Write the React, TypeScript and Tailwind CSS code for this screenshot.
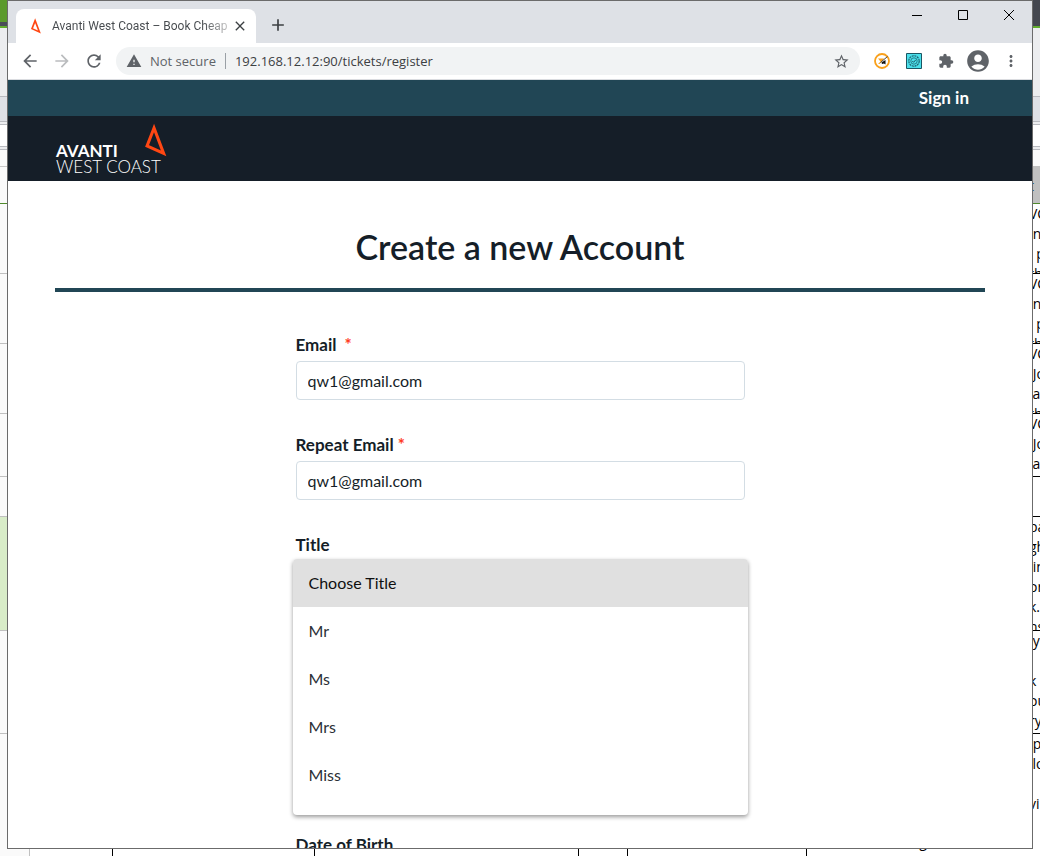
import React from "react";
import { MdArrowBack, MdArrowForward, MdRefresh, MdWarning, MdStarBorder, MdExtension, MdAccountCircle, MdMoreVert, MdClose, MdAdd } from "react-icons/md";

const leftBands = [
  "h-[22px] bg-[#5b9a2c]",
  "h-[4px] bg-[#4a4d57]",
  "h-[2px] bg-[#62ad2e]",
  "h-[69px] bg-[#ecedef] border-b border-[#b9bbc0]",
  "h-[25px] bg-[#dfe1e6] border-b border-[#b9bbc0]",
  "h-[3px] bg-[#ecedef] border-b border-[#b9bbc0]",
  "h-[22px] bg-white border-b border-[#b9bbc0]",
  "h-[3px] bg-[#ecedef] border-b border-[#b9bbc0]",
  "h-[17px] bg-[#fafafa] border-b border-[#c8c8c8]",
  "h-[37px] bg-[#fafafa] border-b border-[#4f8a2c]",
  "h-[70px] bg-[#fafafa] border-b border-[#c0c0c0]",
  "h-[70px] bg-[#fafafa] border-b border-[#c0c0c0]",
  "h-[70px] bg-[#fafafa] border-b border-[#c0c0c0]",
  "h-[63px] bg-[#fafafa] border-b border-[#c0c0c0]",
  "h-[40px] bg-[#fafafa] border-b border-[#c0c0c0]",
  "h-[114px] bg-[#d8ecc8] border-b border-[#c0c0c0]",
  "h-[103px] bg-[#fafafa] border-b border-[#c0c0c0]",
];

const rightBands = [
  "h-[26px] bg-[#44474f]",
  "h-[2px] bg-[#62ad2e]",
  "h-[69px] bg-[#ecedef] border-b border-[#b9bbc0]",
  "h-[25px] bg-[#dfe1e6] border-b border-[#b9bbc0]",
  "h-[3px] bg-[#ecedef] border-b border-[#b9bbc0]",
  "h-[22px] bg-white border-b border-[#b9bbc0]",
  "h-[3px] bg-[#ecedef] border-b border-[#b9bbc0]",
  "h-[16px] bg-[#fafafa]",
];

const sheetCells = [
  { size: "h-[70px]", lines: ["VC", "\u00a0ne", "\u00a0\u00a0p", "th"] },
  { size: "h-[70px]", lines: ["VC", "\u00a0ne", "\u00a0\u00a0p", "th"] },
  { size: "h-[70px]", lines: ["VC", "\u00a0Jo", "ia", "th"] },
  { size: "h-[63px]", lines: ["VC", "\u00a0Jo", "ia"] },
  { size: "h-[40px]", lines: [] },
  { size: "h-[114px]", lines: ["pa", "gh", "\u00a0in", "or", "k.", "ns"] },
  { size: "h-[103px]", lines: ["\u00a0y", "\u00a0", "k", "ou", "ry"] },
  { size: "h-[120px]", lines: ["\u00a0p", "ilo", "\u00a0", "vi"] },
];

function Sail({ className, weight }: { className: string; weight: number }) {
  return (
    <svg viewBox="0 0 22 33" className={className} fill="none" stroke="#ff4713" strokeWidth={weight} aria-hidden="true">
      <path d="M9.2 5.5 2.8 22 18 28.8Z" strokeMiterlimit="8" />
    </svg>
  );
}

function TabStrip() {
  return (
    <div className="flex h-[42px] items-end bg-[#dee1e6] pl-2">
      <div className="flex h-[34px] w-[240px] items-center rounded-t-lg bg-white pl-3 pr-2">
        <Sail className="h-4 w-4" weight={3.4} />
        <span className="ml-2 w-[176px] overflow-hidden whitespace-nowrap bg-linear-to-r from-[#45494d] from-85% to-[#c8c8c8] bg-clip-text font-[Roboto,sans-serif] text-[12px] text-transparent">
          Avanti West Coast – Book Cheap
        </span>
        <button aria-label="Close tab" className="ml-1 text-[#3c4043]"><MdClose size={16} /></button>
      </div>
      <button aria-label="New tab" className="mb-2 ml-3 text-[#3c4043]"><MdAdd size={20} /></button>
      <div className="ml-auto flex self-start text-black">
        <button aria-label="Minimize" className="grid h-7 w-[46px] place-items-center">
          <svg width="10" height="10" stroke="currentColor" aria-hidden="true"><path d="M0 5.5H10" /></svg>
        </button>
        <button aria-label="Maximize" className="grid h-7 w-[46px] place-items-center">
          <svg width="10" height="10" fill="none" stroke="currentColor" aria-hidden="true"><path d="M.5.5H9.5V9.5H.5Z" /></svg>
        </button>
        <button aria-label="Close" className="grid h-7 w-[46px] place-items-center">
          <svg width="10" height="10" stroke="currentColor" aria-hidden="true"><path d="M0 0 10 10M10 0 0 10" /></svg>
        </button>
      </div>
    </div>
  );
}

function Toolbar() {
  return (
    <div className="flex h-[37px] items-center border-b border-[#dadce0] bg-white pl-3 pr-3 font-['Open_Sans',sans-serif] text-[#5f6368]">
      <button aria-label="Back"><MdArrowBack size={20} /></button>
      <button aria-label="Forward" className="ml-3 text-[#babcbe]"><MdArrowForward size={20} /></button>
      <button aria-label="Reload" className="ml-3"><MdRefresh size={20} /></button>
      <div className="ml-3 flex h-7 flex-1 items-center rounded-full bg-[#f1f3f4] pl-2.5 pr-2.5">
        <MdWarning size={16} />
        <span className="ml-2 pt-0.5 text-[13px]">Not secure</span>
        <span className="ml-[9px] h-4 w-px bg-[#9aa0a6]" />
        <input aria-label="Address" defaultValue="192.168.12.12:90/tickets/register" className="ml-[9px] min-w-0 flex-1 bg-transparent pt-0.5 text-[13px] text-[#3c4043] outline-none" />
        <button aria-label="Bookmark"><MdStarBorder size={17} /></button>
      </div>
      <button aria-label="Speed extension" className="ml-3.5">
        <svg width="16" height="16" viewBox="0 0 16 16" fill="none" aria-hidden="true">
          <circle cx="8" cy="8" r="7" fill="#fff" stroke="#f9a01b" strokeWidth="1.8" />
          <path d="M4 5.5H10L8 8.5 5.5 11H4L6.5 8.5Z" fill="#f9a01b" />
          <path d="M13.5 3.5 6.5 9.5" stroke="#444" />
          <path d="M7.5 9.5 11.5 7V11.5L10 10.5 8 11Z" fill="#111" />
        </svg>
      </button>
      <button aria-label="Seal extension" className="ml-4">
        <svg width="16" height="16" viewBox="0 0 16 16" fill="none" stroke="#1b5663" aria-hidden="true">
          <path fill="#4adfea" d="M.5.5H15.5V15.5H.5Z" />
          <circle cx="8" cy="8" r="5.2" strokeDasharray="2 .7" strokeWidth="1.1" />
          <circle cx="8" cy="8" r="3.2" strokeWidth=".7" />
          <path d="M6.3 8 7.6 9.3 9.8 6.8" />
        </svg>
      </button>
      <button aria-label="Extensions" className="ml-4"><MdExtension size={16} /></button>
      <button aria-label="Profile" className="ml-[11px]"><MdAccountCircle size={26} /></button>
      <button aria-label="Menu" className="ml-[11px]"><MdMoreVert size={18} /></button>
    </div>
  );
}

function EmailField({ id, label, gap }: { id: string; label: string; gap: string }) {
  return (
    <div className="flex flex-col">
      <label htmlFor={id} className="text-[17px] leading-6 font-bold">
        {label}<span className={`${gap} text-[#ff3b1f]`}>*</span>
      </label>
      <input id={id} type="email" defaultValue="qw1@gmail.com" className="mt-1 h-[39px] w-full rounded border border-[#d3dde4] bg-white px-[11px] text-base outline-none" />
    </div>
  );
}

function RegisterPage() {
  return (
    <div className="flex-1 overflow-hidden bg-white font-['Lato',sans-serif] text-[#151e28]">
      <div className="flex h-9 items-center justify-end bg-[#214655] pr-[63px]">
        <a href="#signin" className="text-[17px] font-bold text-white">Sign in</a>
      </div>
      <header className="flex h-[65px] bg-[#151e28] px-12">
        <a href="#home" className="relative flex w-[112px] flex-col justify-end pb-1.5 text-white">
          <Sail className="absolute right-0 top-[5px] h-[38px] w-[24px]" weight={2.8} />
          <span className="text-[17px] leading-4 font-bold">AVANTI</span>
          <span className="text-[17px] leading-4 font-light whitespace-nowrap">WEST COAST</span>
        </a>
      </header>
      <main className="px-[47px]">
        <h1 className="border-b-4 border-[#214655] pt-[42px] pb-[18px] text-center text-[34px] leading-[47px] font-semibold">Create a new Account</h1>
        <form className="mx-auto mt-[41px] flex w-[449px] max-w-full flex-col gap-[33px]">
          <EmailField id="email" label="Email" gap="ml-2" />
          <EmailField id="repeat-email" label="Repeat Email" gap="ml-1" />
          <div>
            <label htmlFor="title" className="block text-[17px] leading-6 font-bold">Title</label>
            <select id="title" size={5} defaultValue="Choose Title" className="-mx-[3px] mt-0.5 block h-64 w-[calc(100%+6px)] appearance-none overflow-hidden rounded bg-white text-base text-[#2b3036] shadow-[0_2px_4px_rgba(0,0,0,0.4)] outline-none">
              {["Choose Title", "Mr", "Ms", "Mrs", "Miss"].map((t) => (
                <option key={t} className="h-12 px-4 pt-3.5 checked:bg-[#e0e0e0]">{t}</option>
              ))}
            </select>
            <p className="mt-[18px] text-[17px] leading-6 font-bold">Date of Birth</p>
          </div>
        </form>
      </main>
    </div>
  );
}

export default function App() {
  return (
    <div className="flex h-screen flex-col overflow-hidden bg-white">
      <div className="flex min-h-0 flex-1">
        <div className="w-[7px] shrink-0 overflow-hidden bg-[#fafafa]">
          {leftBands.map((b, i) => <div key={i} className={b} />)}
        </div>
        <div className="flex min-w-0 flex-1 flex-col border border-[#6b6b6b]">
          <TabStrip />
          <Toolbar />
          <RegisterPage />
        </div>
        <div className="w-[7px] shrink-0 overflow-hidden bg-white font-['Open_Sans',sans-serif] text-sm leading-5 text-black">
          {rightBands.map((b, i) => <div key={i} className={b} />)}
          <div className="h-[38px] overflow-hidden border-b border-[#4f8a2c] bg-[#c0c0c0] pt-2.5">
            <p className="-ml-1 text-[#1f4e79]">t</p>
          </div>
          {sheetCells.map((c, i) => (
            <div key={i} className={`${c.size} overflow-hidden border-b border-black`}>
              {c.lines.map((l, j) => <p key={j} className="-ml-1 whitespace-nowrap">{l}</p>)}
            </div>
          ))}
        </div>
      </div>
      <div className="flex h-[7px] shrink-0 overflow-hidden bg-white">
        <div className="w-[30px] border-r border-[#c0c0c0] bg-[#fafafa]" />
        <div className="w-[83px] border-r border-black" />
        <div className="w-[202px] border-r border-black" />
        <div className="w-[264px] border-r border-black" />
        <div className="w-[49px] border-r border-black" />
        <div className="w-[179px] border-r border-black" />
        <div className="flex flex-1 items-end pl-0.5 pb-1 font-['Open_Sans',sans-serif] text-sm leading-5 whitespace-nowrap">
          Records out along with checksum
        </div>
      </div>
    </div>
  );
}
